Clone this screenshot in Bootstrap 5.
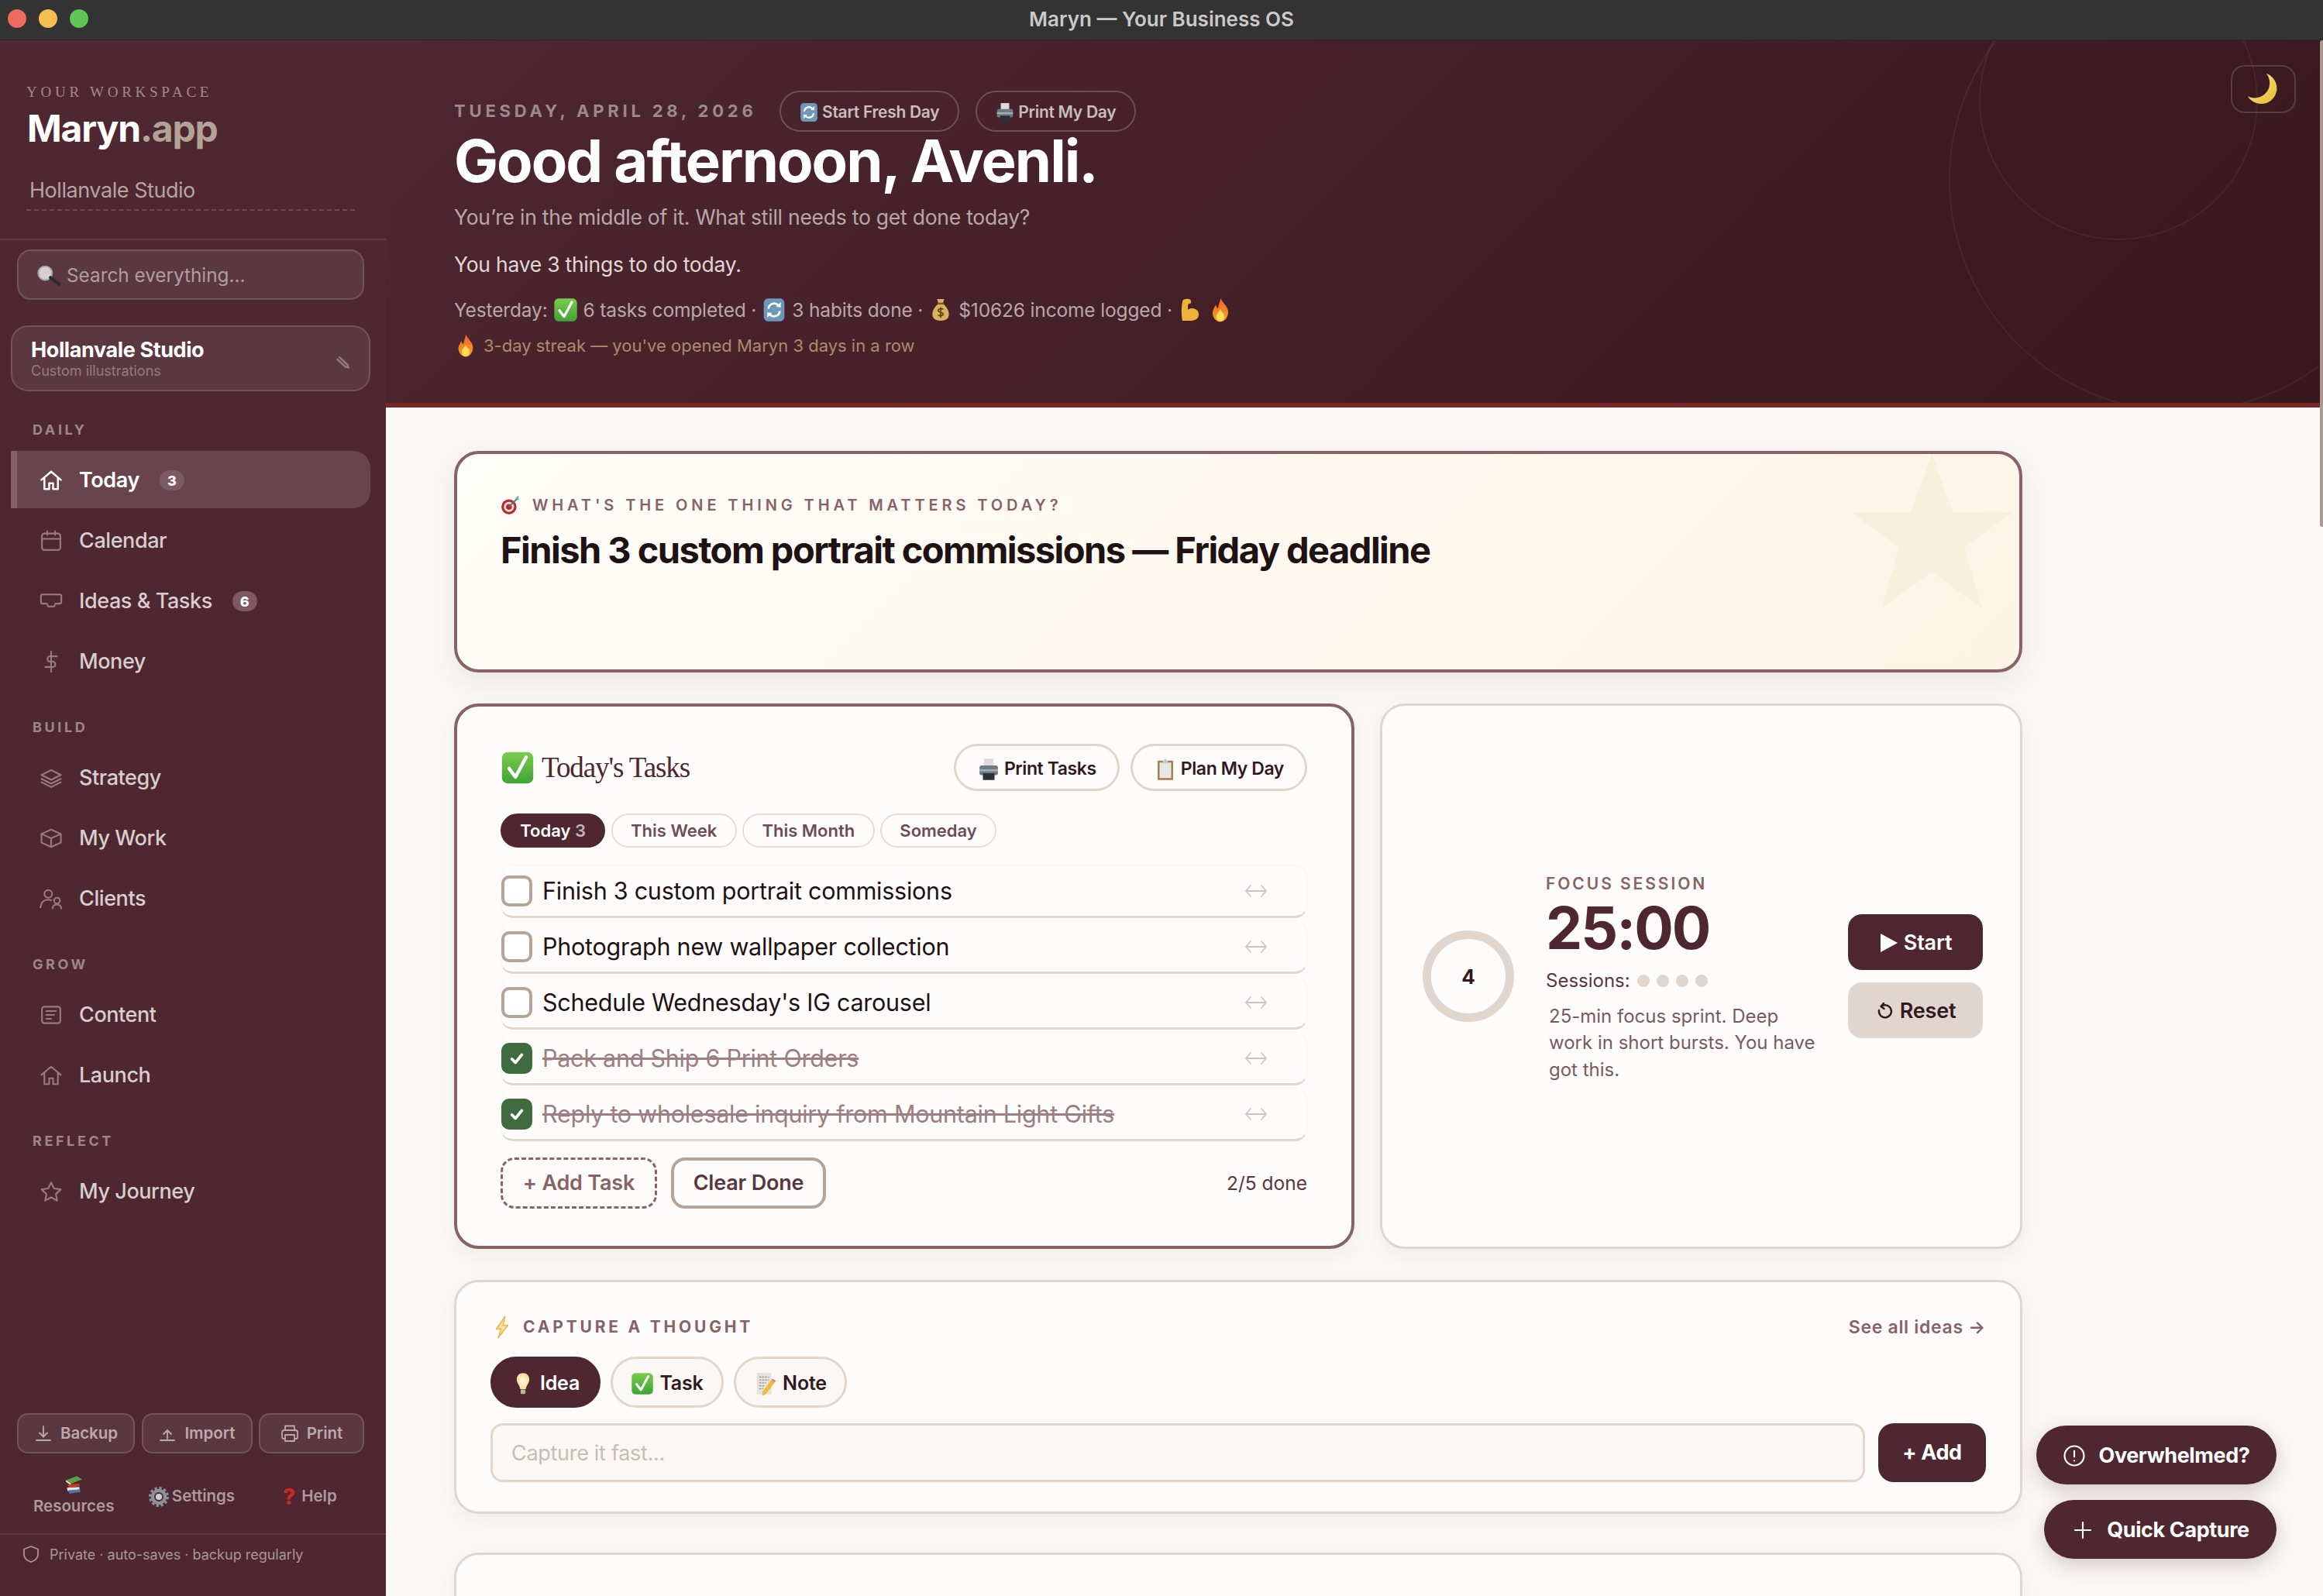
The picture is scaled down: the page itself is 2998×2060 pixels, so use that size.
<!doctype html>
<html lang="en">
<head>
<meta charset="utf-8">
<title>Maryn — Your Business OS</title>
<link href="https://cdn.jsdelivr.net/npm/bootstrap@5.3.0/dist/css/bootstrap.min.css" rel="stylesheet">
<style>
html,body{height:100%;margin:0;overflow:hidden}
body{font-family:Inter,"Liberation Sans",sans-serif;background:#faf7f4;color:#1e1214}
.svg-defs{position:absolute;width:0;height:0}
.app-shell{height:2060px;width:2998px;position:relative;overflow:hidden}
.titlebar{height:52px;background:#333;position:relative;color:#c9c9c9;font-size:26px;font-weight:600;border-bottom:1px solid #2a2a2a;padding-bottom:3px}
.light{width:24px;height:24px;border-radius:50%}
.lights{padding-left:10px;gap:16px}
.l-red{background:#ec6a5e}.l-yel{background:#f4bf4f}.l-grn{background:#61c554}
.win-title{position:absolute;inset:0;padding-bottom:3px}
.body-row{height:2008px}
/* sidebar */
.sidebar{width:498px;flex:none;background:#4e2730;color:#d8cdcf}
.brand{height:258px;padding:53px 40px 0 34px;border-bottom:2px solid rgba(255,255,255,.1)}
.eyebrow{font-family:"Liberation Serif",serif;font-size:19px;line-height:28px;letter-spacing:.25em;color:#a08b8c;text-transform:uppercase;white-space:nowrap}
.logo{font-size:48px;line-height:56px;font-weight:700;color:#fff;letter-spacing:-.024em;margin:5px 0 0 1px}
.logo-soft{color:#b3a296}
.studio{font-size:27px;line-height:36px;color:#b5a3a5;margin-top:34px;padding:0 0 6px 4px;border-bottom:2px dashed rgba(255,255,255,.17);letter-spacing:-.45px}
.search-box{height:65px;margin:12px 28px 0 22px;border:2px solid rgba(255,255,255,.14);background:rgba(255,255,255,.08);border-radius:18px;padding:2px 0 0 24px;font-size:24.300px;color:#ad9ea0;gap:6px}
.workspace{height:85px;margin:33px 20px 0 14px;border:2px solid rgba(255,255,255,.14);background:rgba(255,255,255,.08);border-radius:22px;padding:0 25px 0 24px;position:relative}
.workspace-name{font-size:27px;line-height:32px;font-weight:700;color:#fff;letter-spacing:-.4px}
.workspace-sub{font-size:18px;line-height:22px;color:#907c7f}
.pencil{width:18px;height:18px;color:#8e7a7d;margin-top:8px}
.nav-group{font-size:18px;line-height:24px;font-weight:700;letter-spacing:.2em;color:#9b8789;padding-left:42px;margin:33px 0 15px}
.nav-group-first{margin-top:38px}
.nav-row{height:74px;margin:0 20px 4px 14px;border-left:8px solid transparent;border-radius:0 22px 22px 0;padding:2px 0 0 29px;gap:21px;font-size:27px;font-weight:500;color:#d8cdcf;letter-spacing:-.42px}
.nav-row-on{background:#68454c;border-left-color:#84606a;color:#fff;font-weight:600}
.nav-ico{width:30px;height:30px;flex:none;color:#957a80;fill:none;stroke:currentColor;stroke-width:1.700;stroke-linecap:round;stroke-linejoin:round}
.nav-row-on .nav-ico{color:#fff;stroke-width:2}
.count-pill{background:#7d5a62;color:#fff;font-size:18px;font-weight:800;width:32px;height:26px;margin-left:5px;border-radius:13px;letter-spacing:0}
.side-foot{margin-top:auto}
.util-row{display:grid;grid-template-columns:152px 143px 136px;gap:8.500px;padding:0 28px 0 22px}
.util-btn{height:52px;padding:0;border:2px solid rgba(255,255,255,.14);background:rgba(255,255,255,.08);border-radius:14px;color:#bba9ab;font-size:20.500px;font-weight:600;gap:10px}
.util-ico{width:24px;height:24px;flex:none;fill:none;stroke:currentColor;stroke-width:1.800;stroke-linecap:round;stroke-linejoin:round}
.link-row{display:grid;grid-template-columns:repeat(3,1fr);height:95px;margin:8px 22px 0 19px;color:#ad9a9c;font-size:20.500px;font-weight:600;text-align:center}
.private{height:81px;border-top:2px solid rgba(255,255,255,.09);padding:0 0 29px 28px;gap:12px;font-size:18px;color:#a89699}
/* main */
.main-pane{position:relative;min-width:0}
.hero{height:474px;position:relative;overflow:hidden;background:linear-gradient(135deg,#4e2730 0%,#38171f 100%);border-bottom:6px solid #772826;padding:65px 0 0 88px}
.ring-deco{position:absolute;border:2px solid rgba(255,255,255,.05);border-radius:50%}
.ring-a{width:600px;height:600px;left:2017px;top:-120px}
.ring-b{width:360px;height:360px;left:2056px;top:-102px}
.date-row{height:53px;gap:29px}
.date-text{font-size:22px;font-weight:700;letter-spacing:4.800px;color:#9a8a8c}
.hero-actions{gap:21px}
.hero-btn{height:53px;border:2px solid rgba(255,255,255,.2);border-radius:27px;background:transparent;color:#cbbdbe;font-size:21px;font-weight:600;padding:2px 23.500px 0;gap:4px;letter-spacing:-.3px}
.hero-title{font-size:76px;line-height:76px;font-weight:700;color:#fff;margin:-1px 0 0;letter-spacing:-.026em}
.hero-sub{font-size:26.500px;line-height:36px;color:#b8a8aa;margin:17px 0 0;letter-spacing:-.24px}
.hero-todo{font-size:26.500px;line-height:36px;color:#e2d8d8;margin:25px 0 0;letter-spacing:-.25px}
.hero-yday{font-size:24.500px;line-height:36px;color:#b8a8aa;margin:23px 0 0;gap:7px;letter-spacing:-.15px}
.hero-streak{font-size:22px;line-height:30px;color:#a98d69;margin:13px 0 0;gap:8px}
.moon-btn{position:absolute;left:2381px;top:32px;width:84px;height:62px;border:2px solid rgba(255,255,255,.15);border-radius:18px}
.thumb{position:absolute;right:0;top:0;width:4px;height:628px;background:#a89a8f;border-radius:3px 0 0 3px}
.board{width:2024px;margin-left:88px;padding-top:56px}
/* cards */
.panel{--bs-card-bg:#fefcfa;--bs-card-border-color:#e0d6ce;--bs-card-border-width:3px;--bs-card-border-radius:32px;box-shadow:0 8px 24px rgba(78,39,48,.05)}
.panel-strong{--bs-card-border-color:#876267;--bs-card-border-width:4px}
.one-thing{height:286px;padding:52px 56px 0;overflow:hidden;background:linear-gradient(135deg,#fffdf9 0%,#fdf4e5 100%);box-shadow:0 12px 34px rgba(78,39,48,.08);position:relative}
.star-deco{position:absolute;width:208px;height:200px;right:9px;top:-1px;fill:#f8f0dd}
.one-label{font-size:20px;line-height:28px;font-weight:600;letter-spacing:4.900px;color:#876267;gap:15px}
.one-title{font-size:47px;line-height:60px;font-weight:700;letter-spacing:-1.530px;color:#1e1214;margin:14px 0 0}
.two-up{gap:33px;margin-top:40px}
.tasks{width:1162px;height:704px;padding:48px 57px 0 56px;flex:none}
.focus{width:829px;height:704px;flex:none;padding:0 48px 0 52px}
.tasks-head{height:61px}
.serif-title{font-family:"Liberation Serif",serif;font-size:37px;color:#4e2730;margin:2px 0 0;gap:9px;font-weight:400;letter-spacing:-1.100px}
.head-actions{gap:14px}
.ghost-btn{height:61px;border:3px solid #e0d6ce;border-radius:31px;background:#fefcfa;color:#33181f;font-size:23px;font-weight:600;padding:4px 27px 0;gap:5px;letter-spacing:-.4px}
.chip-row{gap:7.500px;margin-top:29px}
.chip{height:44px;border:2px solid #e6ddd6;border-radius:22px;background:#fefcfa;color:#6e4c54;font-size:22px;font-weight:600;padding:1px 23.300px 0}
.chip-on{background:#4e2730;border-color:#4e2730;color:#fff}
.chip-dim{color:#c4b2b4}
.task-list{margin-top:22px}
.task-row{height:69px;margin-bottom:3px;border:1px solid #f8f4f0;border-bottom:3px solid #e0d6ce;border-radius:16px;gap:13px;font-size:30.500px;color:#1e1214;padding-right:50px;letter-spacing:-.25px}
.box{width:40px;height:40px;flex:none;border:4px solid #b5a598;border-radius:10px;background:#fff}
.box-on{background:#3f6b40;border-color:#3f6b40;color:#fff}
.box-on svg{width:22px;height:22px;fill:none;stroke:currentColor;stroke-width:4;stroke-linecap:round;stroke-linejoin:round}
.task-done{color:#9c7f82;text-decoration:line-through}
.swap{width:30px;height:24px;margin-left:auto;fill:none;stroke:#cfc2c2;stroke-width:1.800;stroke-linecap:round;stroke-linejoin:round}
.task-foot{margin-top:18px;gap:18px}
.add-task{height:66px;width:202px;border:3px dashed #876267;border-radius:18px;color:#876267;background:transparent;font-size:27px;font-weight:600;padding:0;letter-spacing:-.2px}
.clear-done{height:66px;width:200px;border:4px solid #b5a598;border-radius:18px;color:#5a3640;background:transparent;font-size:27px;font-weight:600;padding:0;letter-spacing:-.2px}
.done-count{margin-left:auto;font-size:24.500px;color:#5a3640}
.ring{width:118px;height:118px;border:11px solid #e0d6ce;border-radius:50%;font-size:26px;font-weight:700;color:#33181f;flex:none}
.focus-mid{width:390px;margin-left:41px;flex:none;padding-top:5px}
.focus-label{font-size:21px;line-height:28px;font-weight:600;letter-spacing:.14em;color:#876267}
.clock{font-size:75px;line-height:84px;font-weight:700;color:#4e2730;margin-top:1px;letter-spacing:-2px}
.sessions{font-size:24px;line-height:32px;color:#5a3640;margin-top:10px;gap:9px}
.dot{width:16px;height:16px;border-radius:50%;background:#e0d6ce}
.focus-note{font-size:24px;line-height:34.500px;color:#7a5a60;margin:13px 0 0;padding-left:4px;width:358px}
.focus-btns{width:174px;margin-left:auto;gap:16px}
.solid-btn{height:72px;border:0;border-radius:18px;background:#4e2730;color:#fff;font-size:27px;font-weight:600;gap:8px;padding:2px 0 0;letter-spacing:-.2px}
.soft-btn{background:#e0d6ce;color:#33181f}
.solid-btn svg{width:24px;height:24px}
.ico-fill{fill:currentColor}
.ico-line{fill:none;stroke:currentColor;stroke-width:2.400;stroke-linecap:round;stroke-linejoin:round}
.capture{height:302px;margin-top:40px;padding:43px 44px 0}
.cap-head{height:30px}
.cap-label{font-size:21px;font-weight:700;letter-spacing:3.800px;color:#876267;gap:12px}
.cap-link{font-size:23px;font-weight:600;color:#876267;text-decoration:none;letter-spacing:.7px}
.type-row{gap:13px;margin-top:23px}
.type-btn{height:66px;width:146px;border:3px solid #e0d6ce;border-radius:33px;background:#faf7f4;color:#33181f;font-size:25px;font-weight:600;padding:3px 0 0;gap:7px;letter-spacing:-.2px}
.type-on{background:#4e2730;border-color:#4e2730;color:#fff;width:142px}
.cap-input-row{margin-top:20px;gap:17px}
.cap-input{height:76px;flex:1;border:3px solid #e0d6ce;border-radius:16px;background:#faf7f4;font-size:27px;padding:0 24px;color:#33181f;letter-spacing:-.3px}
.cap-input::placeholder{color:#c9bcb4}
.cap-add{height:76px;width:139px;border:0;border-radius:20px;background:#4e2730;color:#fff;font-size:27px;font-weight:700;padding:0;letter-spacing:-.4px}
.next-panel{height:200px;margin-top:50px}
.float-stack{position:absolute;right:60px;bottom:48px;gap:20px}
.float-btn{height:76px;border:0;border-radius:38px;background:#4e2730;color:#fff;font-size:27px;font-weight:700;gap:16px;box-shadow:0 8px 24px rgba(78,39,48,.22);padding:2px 0 0;letter-spacing:-.4px}
.float-a{width:310px}.float-b{width:300px}
.float-btn svg{width:30px;height:30px;fill:none;stroke:currentColor;stroke-width:1.700;stroke-linecap:round}
.emo-s{width:26px;height:26px;flex:none}
.emo-m{width:30px;height:30px;flex:none}
.emo-w{width:32px;height:32px;flex:none}
.emo-l{width:44px;height:44px;flex:none}
.qmark{color:#c8281e;font-weight:800;font-size:28px;margin-right:8px}
</style>
</head>
<body>
<svg class="svg-defs" aria-hidden="true">
<defs>
<linearGradient id="gGreen" x1="0" y1="0" x2="0" y2="1"><stop offset="0" stop-color="#7ccb4e"/><stop offset="1" stop-color="#3fa435"/></linearGradient>
<linearGradient id="gFire" x1="0" y1="0" x2="0" y2="1"><stop offset="0" stop-color="#f0632b"/><stop offset="1" stop-color="#f7a01f"/></linearGradient>
<linearGradient id="gMoon" x1="0" y1="0" x2="1" y2="1"><stop offset="0" stop-color="#fbe78a"/><stop offset="1" stop-color="#e8b92f"/></linearGradient>
<radialGradient id="gBulb"><stop offset="0" stop-color="#fffbe3"/><stop offset="1" stop-color="#f6dd9a"/></radialGradient>
</defs>
<symbol id="e-check" viewBox="0 0 24 24"><rect x="1" y="1" width="22" height="22" rx="4" fill="url(#gGreen)"/><path d="M6 12.500l4.500 6L18 4.500" fill="none" stroke="#fff" stroke-width="2.400" stroke-linecap="round" stroke-linejoin="round"/></symbol>
<symbol id="e-sync" viewBox="0 0 24 24"><rect x="2" y="1" width="20" height="22" rx="4" fill="#6f97ba"/><path d="M6.500 11a5.500 5.500 0 0 1 9.500-3.500M17.500 13a5.500 5.500 0 0 1-9.500 3.500" fill="none" stroke="#fff" stroke-width="2"/><path d="M14 9l4.500.5V4.500zM10 15l-4.500-.5v5z" fill="#fff"/></symbol>
<symbol id="e-print" viewBox="0 0 24 24"><rect x="7" y="1" width="10" height="9" fill="#dcdcdc"/><rect x="2.500" y="8" width="19" height="10" rx="2" fill="#6f7a84"/><rect x="2.500" y="12" width="19" height="2" fill="#a4adb5"/><rect x="6" y="16" width="12" height="7" fill="#2d3034"/></symbol>
<symbol id="e-bag" viewBox="0 0 24 24"><path d="M8.500 1.500h7L14 6c3.500 2.500 6 6.500 6 10.500 0 4-3.500 6-8 6s-8-2-8-6C4 12.500 6.500 8.500 10 6z" fill="#d9b161"/><rect x="9" y="5" width="6" height="1.800" fill="#7a5a22"/><path d="M14.500 11.500c-1-1-5-1-5 1s5 1.500 5 3.500-4 2-5 1M12 9.500v10" fill="none" stroke="#5b4315" stroke-width="1.300"/></symbol>
<symbol id="e-arm" viewBox="0 0 24 24"><path d="M5 2.500c2.500-1.500 6-1.500 7.500 0l.5 3-3 .8-.3 5.500c2.500-1.700 6-1.700 8.300 0 2.600 2 3 5.500 1.200 8-1.700 2-5 2.700-9 2.700H4.500C3.300 16 3.300 8 5 2.500z" fill="#edb33c"/></symbol>
<symbol id="e-fire" viewBox="0 0 24 24"><path d="M12.500.5c.5 4 6.500 7 7 13 .4 5.500-3.500 10-7.500 10s-8-4-7.500-9.500C5 11 6.500 9.500 7.500 7c.5 2 1 3 2 3.500C10.500 7.500 11 4 12.500.5z" fill="url(#gFire)"/><path d="M12 11c.5 2.500 4 4 4 7.500 0 2.500-2 4.500-4 4.500s-4-2-4-4.500c0-3 3-4.500 4-7.500z" fill="#ffdb57"/></symbol>
<symbol id="e-target" viewBox="0 0 24 24"><circle cx="10" cy="14" r="9" fill="#b92b2b"/><circle cx="10" cy="14" r="6" fill="#f1e4de"/><circle cx="10" cy="14" r="3.500" fill="#b92b2b"/><path d="M10 14L21 3" stroke="#4a7f8c" stroke-width="1.800"/><path d="M19 2l3-1-1 3 2 1-3 1-2-2z" fill="#68b5c4"/></symbol>
<symbol id="e-clip" viewBox="0 0 24 24"><rect x="4" y="3" width="16" height="20" rx="1" fill="#a87f47"/><rect x="6" y="5" width="12" height="16" fill="#e6e6e6"/><path d="M9 4l3-3 3 3v2H9z" fill="#c5c9cc"/></symbol>
<symbol id="e-bolt" viewBox="0 0 24 24"><path d="M15 1L6 14h5l-3 9 10-13h-5l2-9z" fill="#fbe0a0" stroke="#eeb24a" stroke-width="1.200" stroke-linejoin="round"/></symbol>
<symbol id="e-bulb" viewBox="0 0 24 24"><path d="M12 1c4 0 6.500 3 6.500 6.500 0 4-3.500 6.500-3.500 10H9c0-3.500-3.500-6-3.500-10C5.500 4 8 1 12 1z" fill="url(#gBulb)"/><rect x="9.500" y="18" width="5" height="4.500" rx="1" fill="#b9b3a6"/></symbol>
<symbol id="e-memo" viewBox="0 0 24 24"><rect x="3" y="1" width="15" height="22" fill="#e4e2dc"/><path d="M5.500 5h10M5.500 8h10M5.500 11h7M5.500 14h5M5.500 17h4" stroke="#8f8f8f" stroke-width="1" stroke-dasharray="2 1"/><path d="M18 8l3.500 2.500L12 23l-3.500 1 .2-3.500z" fill="#f0b93c"/><path d="M18 8l3.500 2.500 1-1.500L19 6.500z" fill="#e07a7a"/></symbol>
<symbol id="e-books" viewBox="0 0 24 24"><path d="M3 7l13-5 6 4-13 5z" fill="#5f9e45"/><path d="M3 7l6 4v2L3 9z" fill="#eee"/><path d="M5 12l14-1v3L6 16z" fill="#c73a2a"/><path d="M4 16l15-1 0 3L5 20z" fill="#e8e4de"/><path d="M6 19l14-1v3L7 23z" fill="#4d74b4"/></symbol>
<symbol id="e-gear" viewBox="0 0 24 24"><circle cx="12" cy="12" r="7.500" fill="none" stroke="#8a9198" stroke-width="4"/><circle cx="12" cy="12" r="10.500" fill="none" stroke="#8a9198" stroke-width="3" stroke-dasharray="3 2.500"/><circle cx="12" cy="12" r="3.800" fill="#c9ced3"/></symbol>
<symbol id="e-lens" viewBox="0 0 28 24"><circle cx="9" cy="9" r="7.800" fill="#d6cfd3" stroke="#a9a9ad" stroke-width="1.800"/><path d="M15 14l10 7.500" stroke="#2c2c2e" stroke-width="3.600" stroke-linecap="round"/></symbol>
<symbol id="e-moon" viewBox="0 0 24 24"><path d="M14 1A11 11 0 1 1 1 17 10.500 10.500 0 0 0 14 1z" fill="url(#gMoon)"/></symbol>
</svg>

<div class="app-shell d-flex flex-column">
  <div class="titlebar d-flex align-items-center">
    <div class="win-title d-flex align-items-center justify-content-center">Maryn — Your Business OS</div>
    <div class="lights d-flex"><span class="light l-red"></span><span class="light l-yel"></span><span class="light l-grn"></span></div>
  </div>
  <div class="body-row d-flex">
    <aside class="sidebar d-flex flex-column">
      <div class="brand">
        <div class="eyebrow">Your Workspace</div>
        <div class="logo">Maryn<span class="logo-soft">.app</span></div>
        <div class="studio">Hollanvale Studio</div>
      </div>
      <div class="search-box d-flex align-items-center"><svg class="emo-w"><use href="#e-lens"/></svg>Search everything...</div>
      <div class="workspace d-flex align-items-center justify-content-between">
        <div><div class="workspace-name">Hollanvale Studio</div><div class="workspace-sub">Custom illustrations</div></div>
        <svg class="pencil" viewBox="0 0 24 24"><path d="M1 8l6-6 15 14 2 8-8-2z" fill="currentColor"/><path d="M4 5l15 14" stroke="#5a3640" stroke-width="1.500"/></svg>
      </div>
      <div class="nav-group nav-group-first">DAILY</div>
      <div class="nav-row nav-row-on d-flex align-items-center"><svg class="nav-ico" viewBox="0 0 24 24"><path d="M2 11.500L12 3l10 8.500M5 9.500V21h5v-6h4v6h5V9.500"/></svg>Today<span class="count-pill d-flex align-items-center justify-content-center">3</span></div>
      <div class="nav-row d-flex align-items-center"><svg class="nav-ico" viewBox="0 0 24 24"><rect x="2.500" y="4.500" width="19" height="17" rx="2.500"/><path d="M2.500 10h19M8 2v4M16 2v4"/></svg>Calendar</div>
      <div class="nav-row d-flex align-items-center"><svg class="nav-ico" viewBox="0 0 24 24"><path d="M3 5h18a1.500 1.500 0 0 1 1.500 1.500V13a1.500 1.500 0 0 1-1.500 1.500h-4.500L15 17.500H9L7.500 14.500H3A1.500 1.500 0 0 1 1.500 13V6.500A1.500 1.500 0 0 1 3 5z"/></svg>Ideas &amp; Tasks<span class="count-pill d-flex align-items-center justify-content-center">6</span></div>
      <div class="nav-row d-flex align-items-center"><svg class="nav-ico" viewBox="0 0 24 24"><path d="M12 1.500v21M18 6.500H10a3 3 0 0 0 0 5.500h4.500a3 3 0 0 1 0 5.500H6"/></svg>Money</div>
      <div class="nav-group">BUILD</div>
      <div class="nav-row d-flex align-items-center"><svg class="nav-ico" viewBox="0 0 24 24"><path d="M12 4l10 5-10 5L2 9zM2 13l10 5 10-5M2 16.500l10 5 10-5"/></svg>Strategy</div>
      <div class="nav-row d-flex align-items-center"><svg class="nav-ico" viewBox="0 0 24 24"><path d="M12 3l10 4.500v9L12 21 2 16.500v-9zM2 7.500l10 4.500 10-4.500M12 12v9"/></svg>My Work</div>
      <div class="nav-row d-flex align-items-center"><svg class="nav-ico" viewBox="0 0 24 24"><circle cx="9" cy="7" r="4"/><path d="M1 21c.5-5 3.500-8 8-8 1 0 2 .2 3 .6"/><circle cx="18" cy="14" r="3"/><path d="M13.500 22c.3-2.500 2-4 4.500-4s4.200 1.500 4.500 4"/></svg>Clients</div>
      <div class="nav-group">GROW</div>
      <div class="nav-row d-flex align-items-center"><svg class="nav-ico" viewBox="0 0 24 24"><rect x="2.500" y="3.500" width="19" height="17" rx="2.500"/><path d="M7 8h10M7 12h8M7 16h5"/></svg>Content</div>
      <div class="nav-row d-flex align-items-center"><svg class="nav-ico" viewBox="0 0 24 24"><path d="M2 11.500L12 3l10 8.500M5 9.500V21h5v-6h4v6h5V9.500"/></svg>Launch</div>
      <div class="nav-group">REFLECT</div>
      <div class="nav-row d-flex align-items-center"><svg class="nav-ico" viewBox="0 0 24 24"><path d="M12 2.500l3 6.300 6.900.9-5 4.800 1.200 6.800-6.100-3.300-6.100 3.300 1.200-6.800-5-4.800 6.900-.9z"/></svg>My Journey</div>
      <div class="side-foot">
        <div class="util-row">
          <button class="btn util-btn d-flex align-items-center justify-content-center"><svg class="util-ico" viewBox="0 0 24 24"><path d="M12 3v13M7 11.500l5 5 5-5M3 21h18"/></svg>Backup</button>
          <button class="btn util-btn d-flex align-items-center justify-content-center"><svg class="util-ico" viewBox="0 0 24 24"><path d="M12 21V9M7 13l5-5 5 5M3 21h18"/></svg>Import</button>
          <button class="btn util-btn d-flex align-items-center justify-content-center"><svg class="util-ico" viewBox="0 0 24 24"><path d="M6 8V2.500h12V8M6 19H4a2 2 0 0 1-2-2v-6a3 3 0 0 1 3-3h14a3 3 0 0 1 3 3v6a2 2 0 0 1-2 2h-2"/><rect x="6" y="14" width="12" height="8"/></svg>Print</button>
        </div>
        <div class="link-row align-items-center">
          <div class="d-flex flex-column align-items-center"><svg class="emo-s"><use href="#e-books"/></svg>Resources</div>
          <div class="d-flex align-items-center justify-content-center gap-1"><svg class="emo-s"><use href="#e-gear"/></svg>Settings</div>
          <div class="d-flex align-items-center justify-content-center"><span class="qmark">?</span>Help</div>
        </div>
        <div class="private d-flex align-items-center"><svg class="util-ico" viewBox="0 0 24 24"><path d="M12 2l9 3.500V12c0 5-4 8.500-9 10-5-1.500-9-5-9-10V5.500z"/></svg>Private · auto-saves · backup regularly</div>
      </div>
    </aside>
    <main class="main-pane flex-grow-1">
      <header class="hero">
        <span class="ring-deco ring-a"></span><span class="ring-deco ring-b"></span>
        <div class="date-row d-flex align-items-center">
          <span class="date-text">TUESDAY, APRIL 28, 2026</span>
          <div class="hero-actions d-flex">
            <button class="btn hero-btn d-flex align-items-center"><svg class="emo-s"><use href="#e-sync"/></svg>Start Fresh Day</button>
            <button class="btn hero-btn d-flex align-items-center"><svg class="emo-s"><use href="#e-print"/></svg>Print My Day</button>
          </div>
        </div>
        <h1 class="hero-title">Good afternoon, Avenli.</h1>
        <p class="hero-sub">You’re in the middle of it. What still needs to get done today?</p>
        <p class="hero-todo">You have 3 things to do today.</p>
        <div class="hero-yday d-flex align-items-center">Yesterday: <svg class="emo-w"><use href="#e-check"/></svg> 6 tasks completed · <svg class="emo-w"><use href="#e-sync"/></svg> 3 habits done · <svg class="emo-w"><use href="#e-bag"/></svg> $10626 income logged · <svg class="emo-w"><use href="#e-arm"/></svg><svg class="emo-w"><use href="#e-fire"/></svg></div>
        <div class="hero-streak d-flex align-items-center"><svg class="emo-m"><use href="#e-fire"/></svg>3-day streak — you've opened Maryn 3 days in a row</div>
        <button class="btn moon-btn d-flex align-items-center justify-content-center p-0" aria-label="Toggle theme"><svg class="emo-l"><use href="#e-moon"/></svg></button>
      </header>
      <div class="board">
        <section class="card panel panel-strong one-thing">
          <svg class="star-deco" viewBox="0 0 208 200"><polygon points="104,0 131,76 208,76 146,122 169,200 104,153 39,200 62,122 0,76 77,76"/></svg>
          <div class="one-label d-flex align-items-center"><svg class="emo-s"><use href="#e-target"/></svg>WHAT'S THE ONE THING THAT MATTERS TODAY?</div>
          <h2 class="one-title">Finish 3 custom portrait commissions — Friday deadline</h2>
        </section>
        <div class="two-up d-flex">
          <section class="card panel panel-strong tasks">
            <div class="tasks-head d-flex align-items-center justify-content-between">
              <h3 class="serif-title d-flex align-items-center"><svg class="emo-l"><use href="#e-check"/></svg>Today's Tasks</h3>
              <div class="head-actions d-flex">
                <button class="btn ghost-btn d-flex align-items-center"><svg class="emo-m"><use href="#e-print"/></svg>Print Tasks</button>
                <button class="btn ghost-btn d-flex align-items-center"><svg class="emo-m"><use href="#e-clip"/></svg>Plan My Day</button>
              </div>
            </div>
            <div class="chip-row d-flex">
              <button class="btn chip chip-on">Today <span class="chip-dim">3</span></button>
              <button class="btn chip">This Week</button>
              <button class="btn chip">This Month</button>
              <button class="btn chip">Someday</button>
            </div>
            <div class="task-list">
              <div class="task-row d-flex align-items-center"><span class="box"></span>Finish 3 custom portrait commissions<svg class="swap" viewBox="0 0 30 24"><path d="M8 5l-6 7 6 7M22 5l6 7-6 7M2 12h26"/></svg></div>
              <div class="task-row d-flex align-items-center"><span class="box"></span>Photograph new wallpaper collection<svg class="swap" viewBox="0 0 30 24"><path d="M8 5l-6 7 6 7M22 5l6 7-6 7M2 12h26"/></svg></div>
              <div class="task-row d-flex align-items-center"><span class="box"></span>Schedule Wednesday's IG carousel<svg class="swap" viewBox="0 0 30 24"><path d="M8 5l-6 7 6 7M22 5l6 7-6 7M2 12h26"/></svg></div>
              <div class="task-row d-flex align-items-center"><span class="box box-on d-flex align-items-center justify-content-center"><svg viewBox="0 0 24 24"><path d="M5 13l5 5 9-11"/></svg></span><span class="task-done">Pack and Ship 6 Print Orders</span><svg class="swap" viewBox="0 0 30 24"><path d="M8 5l-6 7 6 7M22 5l6 7-6 7M2 12h26"/></svg></div>
              <div class="task-row d-flex align-items-center"><span class="box box-on d-flex align-items-center justify-content-center"><svg viewBox="0 0 24 24"><path d="M5 13l5 5 9-11"/></svg></span><span class="task-done">Reply to wholesale inquiry from Mountain Light Gifts</span><svg class="swap" viewBox="0 0 30 24"><path d="M8 5l-6 7 6 7M22 5l6 7-6 7M2 12h26"/></svg></div>
            </div>
            <div class="task-foot d-flex align-items-center">
              <button class="btn add-task">+ Add Task</button>
              <button class="btn clear-done">Clear Done</button>
              <span class="done-count">2/5 done</span>
            </div>
          </section>
          <section class="card panel focus d-flex flex-row align-items-center">
            <div class="ring d-flex align-items-center justify-content-center">4</div>
            <div class="focus-mid">
              <div class="focus-label">FOCUS SESSION</div>
              <div class="clock">25:00</div>
              <div class="sessions d-flex align-items-center">Sessions: <span class="dot"></span><span class="dot"></span><span class="dot"></span><span class="dot"></span></div>
              <p class="focus-note">25-min focus sprint. Deep work in short bursts. You have got this.</p>
            </div>
            <div class="focus-btns d-flex flex-column">
              <button class="btn solid-btn d-flex align-items-center justify-content-center"><svg class="ico-fill" viewBox="0 0 24 24"><path d="M2 0l22 12L2 24z"/></svg>Start</button>
              <button class="btn solid-btn soft-btn d-flex align-items-center justify-content-center"><svg class="ico-line" viewBox="0 0 24 24"><path d="M8 6a8 8 0 1 1-3 5"/><path d="M11 2L7.500 6l4 3" /></svg>Reset</button>
            </div>
          </section>
        </div>
        <section class="card panel capture">
          <div class="cap-head d-flex align-items-center justify-content-between">
            <div class="cap-label d-flex align-items-center"><svg class="emo-m"><use href="#e-bolt"/></svg>CAPTURE A THOUGHT</div>
            <a class="cap-link" href="#">See all ideas →</a>
          </div>
          <div class="type-row d-flex">
            <button class="btn type-btn type-on d-flex align-items-center justify-content-center"><svg class="emo-m"><use href="#e-bulb"/></svg>Idea</button>
            <button class="btn type-btn d-flex align-items-center justify-content-center"><svg class="emo-m"><use href="#e-check"/></svg>Task</button>
            <button class="btn type-btn d-flex align-items-center justify-content-center"><svg class="emo-m"><use href="#e-memo"/></svg>Note</button>
          </div>
          <div class="cap-input-row d-flex">
            <input class="form-control cap-input" placeholder="Capture it fast...">
            <button class="btn cap-add">+ Add</button>
          </div>
        </section>
        <section class="card panel next-panel"></section>
      </div>
      <span class="thumb"></span>
      <div class="float-stack d-flex flex-column align-items-end">
        <button class="btn float-btn float-a d-flex align-items-center justify-content-center"><svg viewBox="0 0 24 24"><circle cx="12" cy="12" r="10"/><path d="M12 7v6M12 17v.2"/></svg>Overwhelmed?</button>
        <button class="btn float-btn float-b d-flex align-items-center justify-content-center"><svg viewBox="0 0 24 24"><path d="M12 4v16M4 12h16"/></svg>Quick Capture</button>
      </div>
    </main>
  </div>
</div>
<script src="https://cdn.jsdelivr.net/npm/bootstrap@5.3.0/dist/js/bootstrap.bundle.min.js"></script>
</body>
</html>
